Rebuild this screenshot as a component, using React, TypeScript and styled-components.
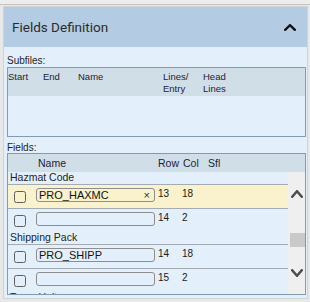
import React from "react";
import styled, { createGlobalStyle } from "styled-components";

const GlobalStyle = createGlobalStyle`
  html, body { margin: 0; padding: 0; }
  body {
    background: #e8e8e8;
    font-family: "Liberation Sans", Arial, sans-serif;
    color: #222;
  }
`;

const TopEdge = styled.div`
  height: 4px;
  background: #ededed;
  border-bottom: 1px solid #c4c4c4;
`;

const Panel = styled.section`
  margin: 1px 2px 0 3px;
  border: 1px solid #d3d3d3;
  background: #e3f0fb;
`;

const Header = styled.div`
  height: 40px;
  background: #b3cbe3;
  display: flex;
  align-items: center;
  justify-content: space-between;
  padding: 0 11px 0 8px;
`;

const Title = styled.h2`
  margin: 0;
  font-family: Roboto, "Liberation Sans", sans-serif;
  font-weight: 400;
  font-size: 13.5px;
  color: #2b2b2b;
`;

const Body = styled.div`
  padding: 8px 1px 3px 3px;
`;

const SectionLabel = styled.div<{ $lh: number; $mt?: number }>`
  font-size: 10px;
  line-height: ${(p) => p.$lh}px;
  margin-top: ${(p) => p.$mt ?? 0}px;
  color: #1e1e1e;
`;

const Table = styled.div`
  border: 1px solid #7f9bb8;
`;

const SubHeader = styled.div`
  height: 28px;
  box-sizing: border-box;
  padding-top: 3px;
  background: #d0dee8;
  display: grid;
  grid-template-columns: 35px 35px 85px 40px 1fr;
  font-size: 9.5px;
  line-height: 11.5px;
  color: #1c2333;
`;

const SubBody = styled.div`
  height: 40px;
`;

const FieldsHeader = styled.div`
  height: 18px;
  background: #d0dee8;
  display: grid;
  grid-template-columns: 30px 120px 25px 25px 1fr;
  font-size: 10.5px;
  line-height: 18px;
  color: #1c2333;
`;

const FieldsBody = styled.div`
  height: 122px;
  display: flex;
`;

const Rows = styled.div`
  flex: 1;
  overflow: hidden;
`;

const GroupLabel = styled.div`
  height: 12px;
  font-size: 10.5px;
  line-height: 10px;
  padding-left: 2px;
  color: #1e1e1e;
`;

const DataRow = styled.div<{ $active?: boolean }>`
  border-top: 1px solid #a5abb2;
  background: ${(p) => (p.$active ? "#faf2cc" : "transparent")};
  display: grid;
  grid-template-columns: 22px 119px 24px 26px 1fr;
  align-items: start;
  padding-top: 3px;
  padding-left: 6px;
  height: 20px;
`;

const CheckBox = styled.span`
  display: block;
  box-sizing: border-box;
  width: 12px;
  height: 12px;
  margin-top: 3px;
  border: 1px solid #5e5e5e;
  border-radius: 2.5px;
`;

const InputBox = styled.div`
  position: relative;
  box-sizing: border-box;
  height: 14px;
  border: 1px solid #8e8e8e;
  border-radius: 3px;
  font-size: 11px;
  line-height: 12px;
  padding-left: 2px;
  color: #111;
`;

const ClearMark = styled.span`
  position: absolute;
  right: 4px;
  top: 0;
  font-size: 11px;
  line-height: 12px;
  color: #333;
`;

const Num = styled.span`
  font-size: 10px;
  line-height: 12px;
  padding-left: 3px;
  color: #1a1a1a;
`;

const Scrollbar = styled.div`
  width: 17px;
  background: #efefef;
  display: flex;
  flex-direction: column;
  align-items: center;
`;

const ArrowSlot = styled.div<{ $pt: number }>`
  height: 40px;
  padding-top: ${(p) => p.$pt}px;
  box-sizing: border-box;
  display: flex;
  justify-content: center;
  width: 100%;
`;

const Track = styled.div`
  flex: 1;
  width: 100%;
  position: relative;
`;

const Thumb = styled.div`
  position: absolute;
  top: 21px;
  right: 0;
  width: 15px;
  height: 14px;
  background: #c9c9c9;
`;

const Chevron = ({ up, color, w, h, sw }: { up: boolean; color: string; w: number; h: number; sw: number }) => (
  <svg width={w} height={h} viewBox={`0 0 ${w} ${h}`} style={{ display: "block" }}>
    <polyline
      points={up ? `1.2,${h - 1.2} ${w / 2},1.2 ${w - 1.2},${h - 1.2}` : `1.2,1.2 ${w / 2},${h - 1.2} ${w - 1.2},1.2`}
      fill="none"
      stroke={color}
      strokeWidth={sw}
      strokeLinecap="square"
    />
  </svg>
);

type Row = { name: string; row: string; col: string; active?: boolean };
type Group = { label: string; rows: Row[] };

const groups: Group[] = [
  {
    label: "Hazmat Code",
    rows: [
      { name: "PRO_HAXMC", row: "13", col: "18", active: true },
      { name: "", row: "14", col: "2" },
    ],
  },
  {
    label: "Shipping Pack",
    rows: [
      { name: "PRO_SHIPP", row: "14", col: "18" },
      { name: "", row: "15", col: "2" },
    ],
  },
  { label: "Temp Units", rows: [] },
];

export default function App() {
  return (
    <>
      <GlobalStyle />
      <TopEdge />
      <Panel>
        <Header>
          <Title>Fields Definition</Title>
          <Chevron up color="#111" w={12} h={7} sw={2.4} />
        </Header>
        <Body>
          <SectionLabel $lh={12}>Subfiles:</SectionLabel>
          <Table>
            <SubHeader>
              <span>Start</span>
              <span>End</span>
              <span>Name</span>
              <span>
                Lines/
                <br />
                Entry
              </span>
              <span>
                Head
                <br />
                Lines
              </span>
            </SubHeader>
            <SubBody />
          </Table>
          <SectionLabel $lh={10} $mt={6}>
            Fields:
          </SectionLabel>
          <Table>
            <FieldsHeader>
              <span />
              <span>Name</span>
              <span>Row</span>
              <span>Col</span>
              <span>Sfl</span>
            </FieldsHeader>
            <FieldsBody>
              <Rows>
                {groups.map((g) => (
                  <React.Fragment key={g.label}>
                    <GroupLabel>{g.label}</GroupLabel>
                    {g.rows.map((r, i) => (
                      <DataRow key={i} $active={r.active}>
                        <CheckBox />
                        <InputBox>
                          {r.name}
                          {r.active && <ClearMark>×</ClearMark>}
                        </InputBox>
                        <Num>{r.row}</Num>
                        <Num>{r.col}</Num>
                        <span />
                      </DataRow>
                    ))}
                  </React.Fragment>
                ))}
              </Rows>
              <Scrollbar>
                <ArrowSlot $pt={18}>
                  <Chevron up color="#4d4d4d" w={12} h={8} sw={2.4} />
                </ArrowSlot>
                <Track>
                  <Thumb />
                </Track>
                <ArrowSlot $pt={15}>
                  <Chevron up={false} color="#4d4d4d" w={12} h={8} sw={2.4} />
                </ArrowSlot>
              </Scrollbar>
            </FieldsBody>
          </Table>
        </Body>
      </Panel>
    </>
  );
}
